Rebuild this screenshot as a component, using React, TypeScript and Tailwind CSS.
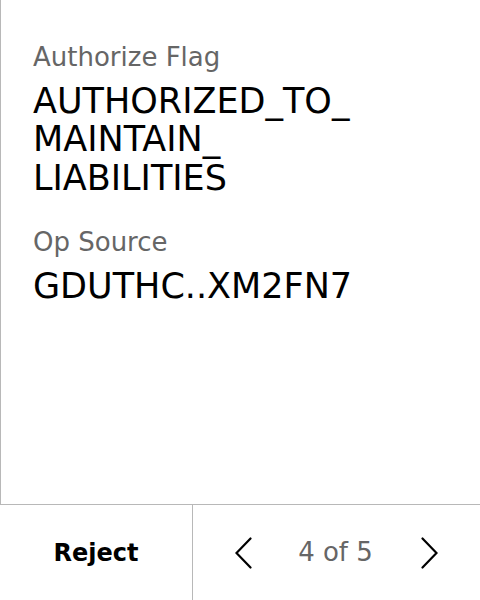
import React from "react";

interface Field {
  label: string;
  value: React.ReactNode;
}

const fields: Field[] = [
  {
    label: "Authorize Flag",
    value: (
      <>
        AUTHORIZED_TO_
        <wbr />
        MAINTAIN_
        <wbr />
        LIABILITIES
      </>
    ),
  },
  { label: "Op Source", value: "GDUTHC..XM2FN7" },
];

const Chevron = ({ dir }: { dir: "left" | "right" }) => (
  <svg width="17" height="32" viewBox="0 0 17 32" fill="none" className="block">
    <polyline
      points={dir === "left" ? "15.5,1.5 1.5,16 15.5,30.5" : "1.5,1.5 15.5,16 1.5,30.5"}
      stroke="#000"
      strokeWidth="2.2"
      strokeLinecap="round"
    />
  </svg>
);

const App: React.FC = () => {
  return (
    <div
      className="flex h-[600px] w-[480px] flex-col bg-white text-black"
      style={{ fontFamily: "'DejaVu Sans', sans-serif" }}
    >
      <div className="flex flex-1 flex-col gap-[30px] border-l border-[#b8b8b8] pl-[32px] pr-[80px] pt-[42px]">
        {fields.map((f) => (
          <div key={f.label} className="flex flex-col gap-[10px]">
            <div className="text-[26px] leading-[30px] text-[#666]">{f.label}</div>
            <div className="text-[35px] leading-[38.4px]">{f.value}</div>
          </div>
        ))}
      </div>

      <div className="flex h-[96px] border-t border-[#b8b8b8]">
        <button className="flex w-[193px] items-center justify-center border-r border-[#b8b8b8] text-[24px] font-bold">
          Reject
        </button>
        <div className="flex flex-1 items-center justify-center">
          <button className="flex items-center">
            <Chevron dir="left" />
          </button>
          <span className="ml-[46px] mr-[48px] text-[26px] text-[#666]">4 of 5</span>
          <button className="flex items-center">
            <Chevron dir="right" />
          </button>
        </div>
      </div>
    </div>
  );
};

export default App;
